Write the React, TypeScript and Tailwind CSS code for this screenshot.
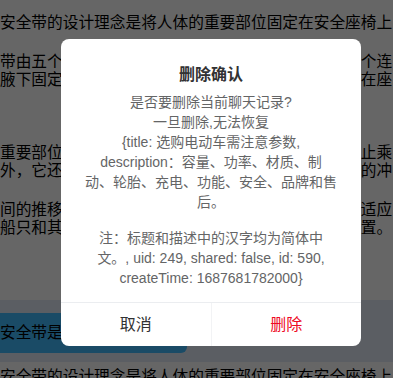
const paragraphs = [
  { mt: 'mt-[14px]', lines: ['安全带的设计理念是将人体的重要部位固定在安全座椅上'] },
  { mt: 'mt-[20px]', lines: ['带由五个部分组成，两条肩带和两条腰带通过中间一个连', '腋下固定，腰带从两侧骨盆处穿过，最终都牢牢固定在座'] },
  { mt: 'mt-[54px]', lines: ['重要部位，在发生碰撞时能够分散冲击力，并有效防止乘', '外，它还能有效减少儿童身体在车辆急剧减速时受到的冲'] },
  { mt: 'mt-[20px]', lines: ['间的推移，儿童安全座椅的设计也在不断地改进，以适应', '船只和其他交通工具中，也广泛使用了类似的安全装置。'] },
]

const messageTop = [
  '是否要删除当前聊天记录?',
  '一旦删除,无法恢复',
  '{title: 选购电动车需注意参数,',
  'description：容量、功率、材质、制',
  '动、轮胎、充电、功能、安全、品牌和售',
  '后。',
]

const messageBottom = [
  '注：标题和描述中的汉字均为简体中',
  '文。, uid: 249, shared: false, id: 590,',
  'createTime: 1687681782000}',
]

export default function App() {
  return (
    <div className="relative h-[378px] w-[393px] overflow-hidden bg-white font-['Liberation_Sans','Noto_Sans_CJK_SC',sans-serif]">
      {/* 聊天内容 */}
      <div className="text-[15.7px] leading-[18.5px] text-black">
        {paragraphs.map((p, i) => (
          <div key={ i } className={ p.mt }>
            {p.lines.map(line => (
              <div key={ line } className="whitespace-nowrap">{line}</div>
            ))}
          </div>
        ))}

        <div className="mt-[62px] h-[62px] bg-[#e3ebf7] pt-[13px]">
          <div className="w-[187px] overflow-hidden whitespace-nowrap rounded-r-md bg-[#43bbff] py-[10px] leading-[20px]">
            安全带是儿童安全座椅中最重要的部分
          </div>
        </div>

        <div className="mt-[6px] whitespace-nowrap">安全带的设计理念是将人体的重要部位固定在安全座椅上</div>
      </div>

      {/* 遮罩 */}
      <div className="absolute inset-0 bg-black/60" />

      {/* 删除确认弹窗 */}
      <div className="absolute left-[61px] top-[39px] w-[300px] overflow-hidden rounded-lg bg-white">
        <div className="pt-[24px] text-center text-[16px] leading-[24px] font-semibold text-[#323233]">
          删除确认
        </div>
        <div className="px-[24px] pt-[5px] pb-[14px] text-center text-[14px] leading-[20px] text-[#646566]">
          {messageTop.map(line => (
            <div key={ line } className="whitespace-nowrap">{line}</div>
          ))}
          <div className="h-[16px]" />
          {messageBottom.map(line => (
            <div key={ line } className="whitespace-nowrap">{line}</div>
          ))}
        </div>
        <div className="flex h-[44px] border-t border-[#ebedf0] text-[16px]">
          <button className="flex-1 text-[#323233]">取消</button>
          <div className="w-px bg-[#f2f3f5]" />
          <button className="flex-1 text-[#ee0a24]">删除</button>
        </div>
      </div>
    </div>
  )
}
